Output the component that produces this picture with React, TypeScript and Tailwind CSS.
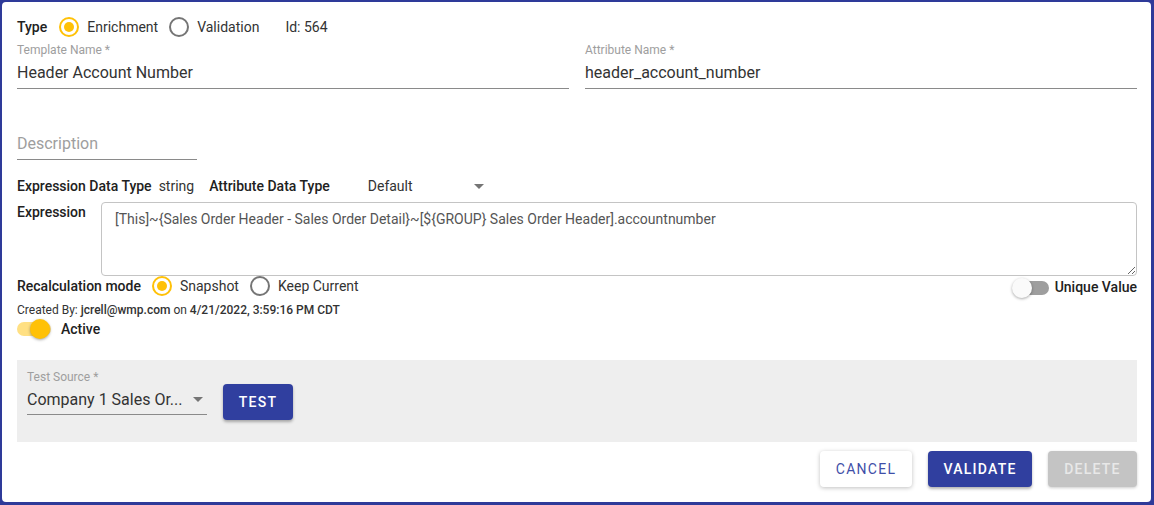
import React from "react";

const font = { fontFamily: "Roboto, 'Noto Sans', sans-serif" };

function Radio({ checked }: { checked: boolean }) {
  return (
    <span
      className={`flex h-[20px] w-[20px] items-center justify-center rounded-full border-2 ${
        checked ? "border-[#ffc107]" : "border-[#757575]"
      }`}
    >
      {checked && <span className="h-[10px] w-[10px] rounded-full bg-[#ffc107]" />}
    </span>
  );
}

function Arrow() {
  return (
    <svg width="10" height="5" viewBox="0 0 10 5">
      <path d="M0 0 L5 5 L10 0 Z" fill="#757575" />
    </svg>
  );
}

function Switch({ on }: { on: boolean }) {
  return (
    <span className="relative flex h-[20px] w-[40px] items-center">
      <span
        className={`ml-[3px] h-[14px] w-[34px] rounded-full ${
          on ? "bg-[#ffe083]" : "bg-[#9e9e9e]"
        }`}
      />
      <span
        className={`absolute top-0 h-[20px] w-[20px] rounded-full shadow-[0_1px_3px_rgba(0,0,0,0.35)] ${
          on ? "left-[16px] bg-[#ffc107]" : "left-0 bg-[#fafafa]"
        }`}
      />
    </span>
  );
}

export default function App() {
  return (
    <div
      className="h-[505px] w-[1154px] bg-[#2e3a99] pb-[3px] pl-[2px] pr-[3px] pt-[2px]"
      style={font}
    >
      <div className="flex h-full w-full flex-col rounded-[4px] bg-white pl-[15px] pr-[14px] pt-[15px] text-[#212121]">
        {/* Type row */}
        <div className="flex h-[20px] items-center text-[14px]">
          <span className="font-medium">Type</span>
          <span className="ml-[12px]">
            <Radio checked />
          </span>
          <span className="ml-[8px] text-[#333]">Enrichment</span>
          <span className="ml-[11px]">
            <Radio checked={false} />
          </span>
          <span className="ml-[8px] text-[#333]">Validation</span>
          <span className="ml-[26px] text-[#333]">Id: 564</span>
        </div>

        {/* Name fields */}
        <div className="mt-[6px] flex gap-[16px]">
          <div className="flex-1">
            <div className="h-[14px] text-[12px] leading-[14px] text-[#9e9e9e]">Template Name *</div>
            <div className="border-b border-[#8a8a8a] pb-[6px] pt-[6px] text-[16px] leading-[19px] text-[#333]">
              Header Account Number
            </div>
          </div>
          <div className="flex-1">
            <div className="h-[14px] text-[12px] leading-[14px] text-[#9e9e9e]">Attribute Name *</div>
            <div className="border-b border-[#8a8a8a] pb-[6px] pt-[6px] text-[16px] leading-[19px] text-[#333]">
              header_account_number
            </div>
          </div>
        </div>

        {/* Description */}
        <div className="mt-[38px] w-[180px] border-b border-[#8a8a8a] pb-[6px] pt-[7px] text-[16px] leading-[19px] text-[#9e9e9e]">
          Description
        </div>

        {/* Data types */}
        <div className="mt-[16px] flex h-[20px] items-center text-[14px]">
          <span className="font-medium">Expression Data Type</span>
          <span className="ml-[7px] text-[#333]">string</span>
          <span className="ml-[15px] font-medium">Attribute Data Type</span>
          <span className="ml-[38px] w-[106px] text-[#333]">Default</span>
          <Arrow />
        </div>

        {/* Expression */}
        <div className="mt-[6px] flex">
          <div className="w-[84px] pt-[1px] text-[14px] font-medium leading-[18px]">Expression</div>
          <textarea
            readOnly
            className="h-[74px] flex-1 rounded-[4px] border border-[#c4c4c4] pl-[13px] pt-[8px] text-[14px] leading-[16px] text-[#555] outline-none"
            style={font}
            defaultValue="[This]~{Sales Order Header - Sales Order Detail}~[${GROUP} Sales Order Header].accountnumber"
          />
        </div>

        {/* Recalculation */}
        <div className="flex h-[20px] items-center text-[14px]">
          <span className="font-medium">Recalculation mode</span>
          <span className="ml-[11px]">
            <Radio checked />
          </span>
          <span className="ml-[8px] text-[#333]">Snapshot</span>
          <span className="ml-[11px]">
            <Radio checked={false} />
          </span>
          <span className="ml-[8px] text-[#333]">Keep Current</span>
          <span className="ml-auto mt-[3px] flex items-center">
            <Switch on={false} />
            <span className="ml-[3px] font-medium">Unique Value</span>
          </span>
        </div>

        {/* Created by */}
        <div className="mt-[7px] h-[14px] text-[12px] leading-[14px] text-[#333]">
          Created By: <span className="font-medium">jcrell@wmp.com</span> on{" "}
          <span className="font-medium">4/21/2022, 3:59:16 PM CDT</span>
        </div>

        {/* Active */}
        <div className="ml-[-3px] mt-[2px] flex h-[20px] items-center text-[14px]">
          <Switch on />
          <span className="ml-[7px] font-medium">Active</span>
        </div>

        {/* Test panel */}
        <div className="mt-[21px] flex h-[82px] bg-[#eeeeee] pl-[10px] pt-[10px]">
          <div className="w-[180px]">
            <div className="h-[14px] text-[12px] leading-[14px] text-[#9e9e9e]">Test Source *</div>
            <div className="flex items-center border-b border-[#8a8a8a] pb-[5px] pt-[6px]">
              <span className="flex-1 text-[16px] leading-[19px] text-[#333]">Company 1 Sales Or...</span>
              <span className="mr-[4px]">
                <Arrow />
              </span>
            </div>
          </div>
          <div className="ml-[16px] mt-[14px] flex h-[36px] w-[70px] items-center justify-center rounded-[4px] bg-[#303f9f] text-[14px] font-medium tracking-[1.25px] text-white shadow-[0_2px_3px_rgba(0,0,0,0.3)]">
            TEST
          </div>
        </div>

        {/* Buttons */}
        <div className="mt-[9px] flex justify-end gap-[16px] text-[14px] font-medium tracking-[1.25px]">
          <div className="flex h-[36px] w-[92px] items-center justify-center rounded-[4px] bg-white font-normal text-[#3f4fa8] shadow-[0_1px_4px_rgba(0,0,0,0.25)]">
            CANCEL
          </div>
          <div className="flex h-[36px] w-[104px] items-center justify-center rounded-[4px] bg-[#303f9f] text-white shadow-[0_2px_3px_rgba(0,0,0,0.3)]">
            VALIDATE
          </div>
          <div className="flex h-[36px] w-[89px] items-center justify-center rounded-[4px] bg-[#c4c4c4] text-[#e8e8e8] shadow-[0_1px_3px_rgba(0,0,0,0.2)]">
            DELETE
          </div>
        </div>
      </div>
    </div>
  );
}
